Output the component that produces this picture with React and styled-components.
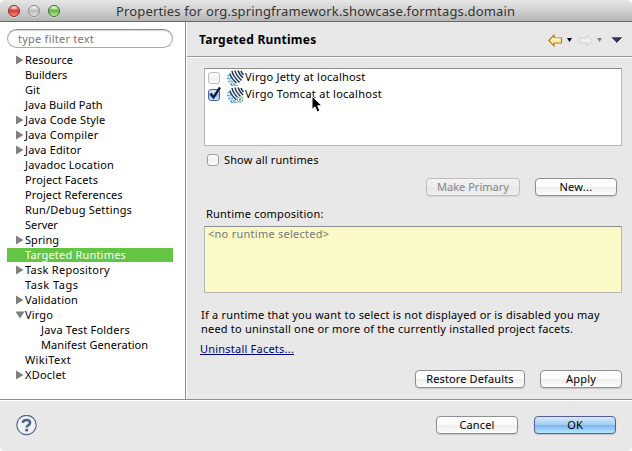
import React from "react";
import styled, { createGlobalStyle, css } from "styled-components";

const GlobalStyle = createGlobalStyle`
  * { box-sizing: border-box; }
  html, body { margin: 0; background: #fff; overflow: hidden; }
  body { font: 11px/15px "Noto Sans", "Open Sans", sans-serif; color: #000; }
`;

const Window = styled.div`
  width: 632px;
  height: 451px;
  display: flex;
  flex-direction: column;
  background: #e8e8e8;
  border-radius: 5px;
  overflow: hidden;
`;

const TitleBar = styled.header`
  height: 22px;
  flex: none;
  display: flex;
  align-items: center;
  padding-left: 8px;
  gap: 8px;
  background: linear-gradient(#e6e6e6, #d0d0d0 50%, #b5b5b5);
  border-bottom: 1px solid #686868;
`;

const tones = {
  red: ["#7d2d2a", "#ffb0a6", "#d83c35", "#ff8a80"],
  grey: ["#8b8b8b", "#eeeeee", "#bcbcbc", "#e4e4e4"],
  green: ["#3f6b2c", "#cdf0b2", "#67b547", "#c0f590"],
};

const Light = styled.span`
  width: 12px;
  height: 12px;
  border-radius: 50%;
  border: 1px solid ${({ $tone }) => tones[$tone][0]};
  background:
    radial-gradient(ellipse 4px 2px at 50% 18%, #fffc, #fff0),
    linear-gradient(${({ $tone }) => tones[$tone].slice(1).join(", ")});
  box-shadow: 0 1px 0 #ffffff66;
`;

const Title = styled.h1`
  margin: 0 0 0 48px;
  font-size: 13px;
  font-weight: 400;
  line-height: 20px;
  letter-spacing: 0.155px;
  color: #333;
  white-space: nowrap;
`;

const Body = styled.div`
  height: 377px;
  flex: none;
  display: flex;
`;

const Sidebar = styled.nav`
  width: 187px;
  flex: none;
  padding: 7px 12px 0 7px;
  background: #fff;
  border-right: 1px solid #fff;
  box-shadow: inset -1px 0 0 #8e8e8e;
`;

const Filter = styled.div`
  height: 19px;
  width: 166px;
  margin-bottom: 5px;
  padding-left: 10px;
  border: 1px solid #a9a9a9;
  border-top-color: #8c8c8c;
  border-radius: 10px;
  box-shadow: inset 0 1px 1px #d4d4d4;
  line-height: 18px;
  letter-spacing: 0.24px;
  color: #777;
`;

const TreeRow = styled.div`
  display: flex;
  align-items: center;
  width: 166px;
  height: 14px;
  margin-bottom: 1px;
  padding-bottom: 2px;
  padding-left: ${({ $child }) => ($child ? 25 : 9)}px;
  letter-spacing: ${({ $track }) => $track}px;
  white-space: nowrap;
  ${({ $selected }) =>
    $selected &&
    css`
      background: #64c544;
      color: #fff;
    `}
`;

const Twisty = styled.span`
  width: 9px;
  height: 12px;
  padding-top: 2px;
  flex: none;
  display: flex;
  align-items: center;
  svg { display: block; fill: #808080; }
`;

const Page = styled.main`
  flex: 1;
  display: flex;
  flex-direction: column;
`;

const PageHeader = styled.div`
  height: 36px;
  flex: none;
  display: flex;
  align-items: center;
  justify-content: space-between;
  padding: 0 10px 0 12px;
  border-bottom: 1px solid #fff;
  box-shadow: inset 0 -1px 0 #999;
`;

const Heading = styled.h2`
  margin: 0;
  font-size: 12px;
  line-height: 16px;
  letter-spacing: 0.24px;
`;

const Nav = styled.div`
  display: flex;
  align-items: center;
  padding-top: 1px;
  svg { display: block; }
`;

const Panel = styled.div`
  width: 418px;
  height: ${({ $height }) => $height}px;
  flex: none;
  margin-left: 17px;
  padding: 0 3px;
  background: ${({ $fill }) => $fill};
  border: 1px solid #b5b5b5;
  border-top-color: #8d8d8d;
`;

const Placeholder = styled.div`
  line-height: 14px;
  letter-spacing: 0.26px;
  color: #777;
`;

const RuntimeList = styled(Panel)`
  margin-top: 10px;
`;

const Runtime = styled.div`
  display: flex;
  align-items: center;
  height: 17px;
  letter-spacing: ${({ $track }) => $track}px;
  position: relative;
`;

const Label = styled.span`
  padding-bottom: 2px;
`;

const Check = styled.span`
  position: relative;
  width: 12px;
  height: 12px;
  flex: none;
  border-radius: 3px;
  border: 1px solid #a0a0a0;
  background: linear-gradient(#fff, #f1f1f1 60%, #fff);
  ${({ $soft }) => $soft && "border-color: #bcbcbc;"}
  ${({ $on }) =>
    $on &&
    css`
      border-color: #4a5f9f;
      background: linear-gradient(#dcedfb, #8dbfee 55%, #c9f0ff);
    `}
  svg { position: absolute; left: -1px; top: -4px; }
`;

const RuntimeIcon = styled.svg`
  width: 17px;
  height: 16px;
  margin: 0 1px 0 7px;
`;

const Pointer = styled.svg`
  position: absolute;
  left: 103px;
  top: 9px;
`;

const ShowAll = styled.label`
  display: flex;
  align-items: center;
  gap: 5px;
  height: 12px;
  margin: 8px 0 0 20px;
  letter-spacing: 0.14px;
`;

const Actions = styled.div`
  display: flex;
  justify-content: flex-end;
  gap: ${({ $gap }) => $gap}px;
  padding-right: ${({ $end }) => $end}px;
  margin-top: ${({ $top }) => $top}px;
`;

const Button = styled.button`
  width: ${({ $width }) => $width}px;
  height: 18px;
  padding: 0 0 1px;
  border: 1px solid #8f8f8f;
  border-radius: 4px;
  background: linear-gradient(#fff, #fbfbfb 48%, #eeeeee 52%, #fdfdfd);
  box-shadow: 0 1px 1px #00000026;
  font: inherit;
  line-height: 15px;
  letter-spacing: ${({ $track }) => $track || 0}px;
  color: #000;
  &:disabled {
    color: #858585;
    border-color: #bdbdbd;
    background: linear-gradient(#f2f2f2, #ededed 50%, #e7e7e7 52%, #efefef);
    box-shadow: 0 1px 1px #00000012;
  }
  ${({ $primary }) =>
    $primary &&
    css`
      border-color: #555b9b;
      background: linear-gradient(#d7e9fa, #a3cdf5 48%, #79b5f0 52%, #b8e7ff);
    `}
`;

const Caption = styled.div`
  margin: 10px 0 5px 19px;
  letter-spacing: 0.2px;
`;

const Note = styled.p`
  margin: 15px 0 0 14px;
  line-height: 14px;
  white-space: nowrap;
`;

const NoteLine = styled.span`
  display: block;
  letter-spacing: ${({ $track }) => $track}px;
`;

const FacetLink = styled.a`
  align-self: flex-start;
  height: 13px;
  margin: 6px 0 0 13px;
  line-height: 13px;
  letter-spacing: 0.22px;
  color: #00007c;
  border-bottom: 1px solid #00007c;
`;

const Footer = styled.footer`
  flex: 1;
  display: flex;
  justify-content: space-between;
  border-top: 1px solid #8e8e8e;
  box-shadow: inset 0 1px 0 #fff;
  padding: 15px 16px 0;
`;

const Spacer = styled.span`
  width: ${({ $w }) => $w}px;
`;

const tree = [
  ["Resource", 0.06, "closed"],
  ["Builders", -0.03],
  ["Git", 0.06],
  ["Java Build Path", 0.06],
  ["Java Code Style", 0.17, "closed"],
  ["Java Compiler", 0.2, "closed"],
  ["Java Editor", 0.17, "closed"],
  ["Javadoc Location", 0.15],
  ["Project Facets", 0.12],
  ["Project References", 0.1],
  ["Run/Debug Settings", 0.18],
  ["Server", -0.05],
  ["Spring", 0.05, "closed"],
  ["Targeted Runtimes", 0.2, "selected"],
  ["Task Repository", 0.28, "closed"],
  ["Task Tags", 0.52],
  ["Validation", 0.16, "closed"],
  ["Virgo", 0.14, "open"],
  ["Java Test Folders", 0.21, "child"],
  ["Manifest Generation", 0.07, "child"],
  ["WikiText", 0.39],
  ["XDoclet", 0.23, "closed"],
];

const TreeItem = ({ item: [label, track, state] }) => (
  <TreeRow $track={track} $selected={state === "selected"} $child={state === "child"}>
    <Twisty>
      {state === "closed" && (
        <svg width="8" height="10"><path d="M0 .5 7.5 5 0 9.5Z" /></svg>
      )}
      {state === "open" && (
        <svg width="9" height="8"><path d="M-.5 .5h9L4 7.5Z" /></svg>
      )}
    </Twisty>
    {label}
  </TreeRow>
);

const VirgoIcon = ({ badge }) => (
  <RuntimeIcon viewBox="0 0 17 16" fill="none">
    <path d="M.5 5.500H3M0 8.500H4M1 11.500H6M3 14H9M4 15.500H11" stroke="#4fa5d8" strokeWidth="1.500" strokeDasharray="2 .8" />
    <path d="M5 1Q5.500 5.500 12.500 12.500M8 .500Q8.500 4.500 14.500 10.500M11 .500Q12 4 16 8M3 3.500Q3.500 7.500 9.500 13M14 1Q14.500 3 16.500 5" stroke="#1e3558" strokeWidth="1.500" />
    <path d="M1.500 7.500Q4 12 8 15" stroke="#7dbce0" strokeWidth=".9" />
    {badge && (
      <g>
        <circle cx="13" cy="12.500" r="3.500" fill="#fff" />
        <circle cx="13" cy="12.500" r="2.700" stroke="#57ad7c" />
        <circle cx="13" cy="12.500" r="1" fill="#268a50" />
      </g>
    )}
  </RuntimeIcon>
);

const Back = () => (
  <svg width="15" height="13" viewBox="0 0 15 13">
    <path d="M.8 6.500 6 1.200V4H13.500V9H6v2.800Z" fill="#fff0b0" stroke="#b87810" strokeWidth="1.100" />
    <path d="M2.500 6.500 5 4V5H12.500" fill="none" stroke="#fffbe5" />
  </svg>
);

const Forward = () => (
  <svg width="15" height="13" viewBox="0 0 15 13">
    <path d="M14.200 6.500 9 1.200V4H1.500V9H9v2.800Z" fill="#efefef" stroke="#cfcfcf" />
  </svg>
);

const Caret = ({ fill }) => (
  <svg width="5" height="4"><path d="M0 0h5L2.500 4Z" fill={fill} /></svg>
);

const MenuCaret = () => (
  <svg width="11" height="6">
    <path d="M.3 .3h10.400L5.500 5.500Z" fill="#38306a" />
    <path d="M10.500 .5 5.500 5.500" stroke="#111" />
  </svg>
);

const HelpIcon = () => (
  <svg width="22" height="22" viewBox="0 0 22 22" fill="none">
    <circle cx="10.500" cy="10" r="9.700" fill="#f0f1f3" stroke="#586b8d" strokeWidth="1.200" />
    <path d="M6.800 7.800Q7 4.900 10.500 4.900T14.100 7.700Q14.100 9.200 12.200 10.300Q10.700 11.200 10.700 12.600" stroke="#4b628b" strokeWidth="2.500" />
    <rect x="9.300" y="13.800" width="2.800" height="2.600" fill="#4b628b" />
  </svg>
);

export default function App() {
  return (
    <>
      <GlobalStyle />
      <Window>
        <TitleBar>
          <Light $tone="red" />
          <Light $tone="grey" />
          <Light $tone="green" />
          <Title>Properties for org.springframework.showcase.formtags.domain</Title>
        </TitleBar>
        <Body>
          <Sidebar>
            <Filter>type filter text</Filter>
            {tree.map((item) => <TreeItem key={item[0]} item={item} />)}
          </Sidebar>
          <Page>
            <PageHeader>
              <Heading>Targeted Runtimes</Heading>
              <Nav>
                <Back /><Spacer $w={4} /><Caret fill="#000" />
                <Spacer $w={6} />
                <Forward /><Spacer $w={4} /><Caret fill="#808080" />
                <Spacer $w={9} />
                <MenuCaret />
              </Nav>
            </PageHeader>
            <RuntimeList $height={78} $fill="#fff">
              <Runtime $track={0.22}>
                <Check $soft />
                <VirgoIcon />
                <Label>Virgo Jetty at localhost</Label>
              </Runtime>
              <Runtime $track={0.27}>
                <Check $on>
                  <svg width="14" height="14" fill="none">
                    <path d="M2.500 7.500 5.500 11.500 12 1.500" stroke="#111a36" strokeWidth="2.300" />
                  </svg>
                </Check>
                <VirgoIcon badge />
                <Label>Virgo Tomcat at localhost</Label>
                <Pointer width="13" height="19" viewBox="0 0 13 19">
                  <path d="M1 1V14.500L4 11.800 6.200 17 8.800 15.800 6.700 10.800H11Z" fill="#000" stroke="#fff" />
                </Pointer>
              </Runtime>
            </RuntimeList>
            <ShowAll><Check /><Label>Show all runtimes</Label></ShowAll>
            <Actions $gap={15} $end={15} $top={12}>
              <Button $width={94} $track={0.02} disabled>Make Primary</Button>
              <Button $width={82} $track={0.27}>New...</Button>
            </Actions>
            <Caption>Runtime composition:</Caption>
            <Panel $height={67} $fill="#fbfac7">
              <Placeholder>&lt;no runtime selected&gt;</Placeholder>
            </Panel>
            <Note>
              <NoteLine $track={0.21}>If a runtime that you want to select is not displayed or is disabled you may</NoteLine>
              <NoteLine $track={0.2}>need to uninstall one or more of the currently installed project facets.</NoteLine>
            </Note>
            <FacetLink>Uninstall Facets...</FacetLink>
            <Actions $gap={15} $end={10} $top={15}>
              <Button $width={110} $track={0.13}>Restore Defaults</Button>
              <Button $width={82} $track={0.2}>Apply</Button>
            </Actions>
          </Page>
        </Body>
        <Footer>
          <HelpIcon />
          <Actions $gap={16} $end={0} $top={1}>
            <Button $width={82} $track={0.13}>Cancel</Button>
            <Button $width={82} $primary>OK</Button>
          </Actions>
        </Footer>
      </Window>
    </>
  );
}
